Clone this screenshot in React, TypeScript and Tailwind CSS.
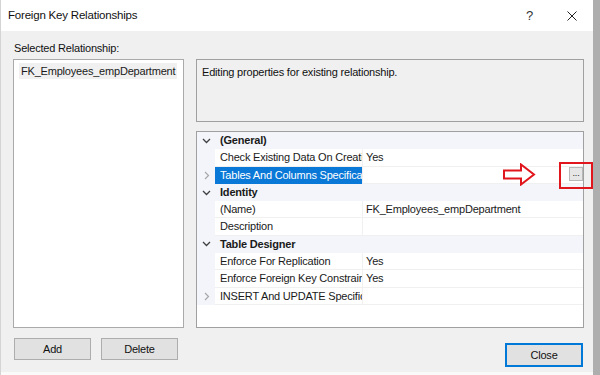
import React from 'react';

type Row =
    | { kind: 'cat'; label: string }
    | { kind: 'prop'; name: string; value?: string; expandable?: boolean; selected?: boolean; button?: boolean };

const rows: Row[] = [
    { kind: 'cat', label: '(General)' },
    { kind: 'prop', name: 'Check Existing Data On Creation Or Re-Enabling', value: 'Yes' },
    { kind: 'prop', name: 'Tables And Columns Specification', expandable: true, selected: true, button: true },
    { kind: 'cat', label: 'Identity' },
    { kind: 'prop', name: '(Name)', value: 'FK_Employees_empDepartment' },
    { kind: 'prop', name: 'Description', value: '' },
    { kind: 'cat', label: 'Table Designer' },
    { kind: 'prop', name: 'Enforce For Replication', value: 'Yes' },
    { kind: 'prop', name: 'Enforce Foreign Key Constraint', value: 'Yes' },
    { kind: 'prop', name: 'INSERT And UPDATE Specification', expandable: true },
];

const ChevronDown = () => (
    <svg width="9" height="6" viewBox="0 0 9 6" className="block">
        <path d="M1 1 L4.5 4.5 L8 1" fill="none" stroke="#404040" strokeWidth="1.3" />
    </svg>
);

const ChevronRight = () => (
    <svg width="6" height="9" viewBox="0 0 6 9" className="block">
        <path d="M1 1 L4.5 4.5 L1 8" fill="none" stroke="#a8a8a8" strokeWidth="1.2" />
    </svg>
);

const GridRow: React.FC<{ row: Row }> = ({ row }) => {
    if (row.kind === 'cat') {
        return (
            <div className="flex h-[17.3px] items-center bg-[#f3f5fa]">
                <div className="flex w-[18px] shrink-0 justify-center pl-[1px]">
                    <ChevronDown />
                </div>
                <span className="pl-[5px] font-bold text-[#1a1a1a]">{row.label}</span>
            </div>
        );
    }
    return (
        <div className="flex h-[17.3px] items-stretch">
            <div className="flex w-[18px] shrink-0 items-center justify-center bg-[#f3f5fa] pl-[1px]">
                {row.expandable && <ChevronRight />}
            </div>
            <div
                className={`flex w-[147px] shrink-0 items-center overflow-hidden whitespace-nowrap border-b pl-[5px] ${
                    row.selected ? 'border-[#0a78d7] bg-[#0a78d7] text-white' : 'border-[#f0f0f0] bg-white text-[#1a1a1a]'
                }`}
            >
                {row.name}
            </div>
            <div className="flex flex-1 items-center justify-between border-b border-l border-[#f0f0f0] bg-white pl-[3px] text-[#1a1a1a]">
                <span>{row.value}</span>
                {row.button && (
                    <div className="mb-[1px] flex h-[14px] w-[14px] items-end justify-center border border-[#b8b8b8] bg-[#e6e6e6] pb-[2px] text-[9px] leading-none text-[#222]">
                        ...
                    </div>
                )}
            </div>
        </div>
    );
};

const Button: React.FC<{ label: string; className?: string }> = ({ label, className }) => (
    <div className={`flex items-center justify-center bg-[#e1e1e1] text-[#111] ${className ?? ''}`}>{label}</div>
);

export default function App() {
    return (
        <div
            className="flex h-[375px] w-[600px] overflow-hidden bg-[#aeaeae] text-[11px] tracking-[-0.2px] text-[#1a1a1a]"
            style={{ fontFamily: '"Liberation Sans", Arial, sans-serif' }}
        >
            <div className="flex w-[593px] flex-col border-l border-[#d4d4d4]">
                {/* title bar */}
                <div className="flex h-[31px] items-center bg-white pl-[7px]">
                    <span className="flex-1 text-[11.5px] text-[#111]">Foreign Key Relationships</span>
                    <span className="mr-[34px] text-[13px] text-[#333]">?</span>
                    <svg width="10" height="10" viewBox="0 0 10 10" className="mr-[16px]">
                        <path d="M0.5 0.5 L9.5 9.5 M9.5 0.5 L0.5 9.5" stroke="#222" strokeWidth="1" />
                    </svg>
                </div>

                {/* body */}
                <div className="flex flex-1 flex-col bg-[#f0f0f0] pl-[12px] pr-[8px] pt-[9px]">
                    <div className="flex h-[19px] items-start pl-[1px] text-[#111]">Selected Relationship:</div>
                    <div className="flex gap-[12px]">
                        {/* left column */}
                        <div className="flex w-[171px] flex-col">
                            <div className="h-[269px] border border-[#aaaaaa] bg-white p-[3px] pl-[5px]">
                                <div className="flex h-[16px] w-fit items-center bg-[#f0f0f0] pl-[2px] pr-[2px]">
                                    FK_Employees_empDepartment
                                </div>
                            </div>
                            <div className="mt-[10px] flex gap-[10px] pl-[1px]">
                                <Button label="Add" className="h-[22px] w-[77px] border border-[#adadad]" />
                                <Button label="Delete" className="h-[22px] w-[77px] border border-[#adadad]" />
                            </div>
                        </div>

                        {/* right column */}
                        <div className="flex w-[388px] flex-col">
                            <div className="h-[63px] border border-[#a0a0a0] px-[5px] pt-[4px] text-[#111]">
                                Editing properties for existing relationship.
                            </div>
                            <div className="relative mt-[9px] flex h-[197px] flex-col border border-[#a0a0a0] bg-white">
                                {rows.map((r, i) => (
                                    <GridRow key={i} row={r} />
                                ))}

                                {/* annotation arrow */}
                                <svg
                                    width="33"
                                    height="23"
                                    viewBox="0 0 33 23"
                                    className="absolute left-[306px] top-[31px]"
                                >
                                    <path
                                        d="M1 7.5 H18 V1.5 L31 11.5 L18 21.5 V15.5 H1 Z"
                                        fill="white"
                                        stroke="#e0161c"
                                        strokeWidth="2"
                                        strokeLinejoin="miter"
                                    />
                                </svg>
                                {/* annotation box */}
                                <div className="absolute left-[362px] top-[30px] h-[27px] w-[34px] border-2 border-[#e0161c]" />
                            </div>
                            <div className="mt-[15px] flex justify-end pr-[1px]">
                                <Button label="Close" className="h-[24px] w-[78px] border-2 border-[#0078d7]" />
                            </div>
                        </div>
                    </div>
                </div>
                <div className="h-[3px] bg-[#fafafa]" />
            </div>
        </div>
    );
}
